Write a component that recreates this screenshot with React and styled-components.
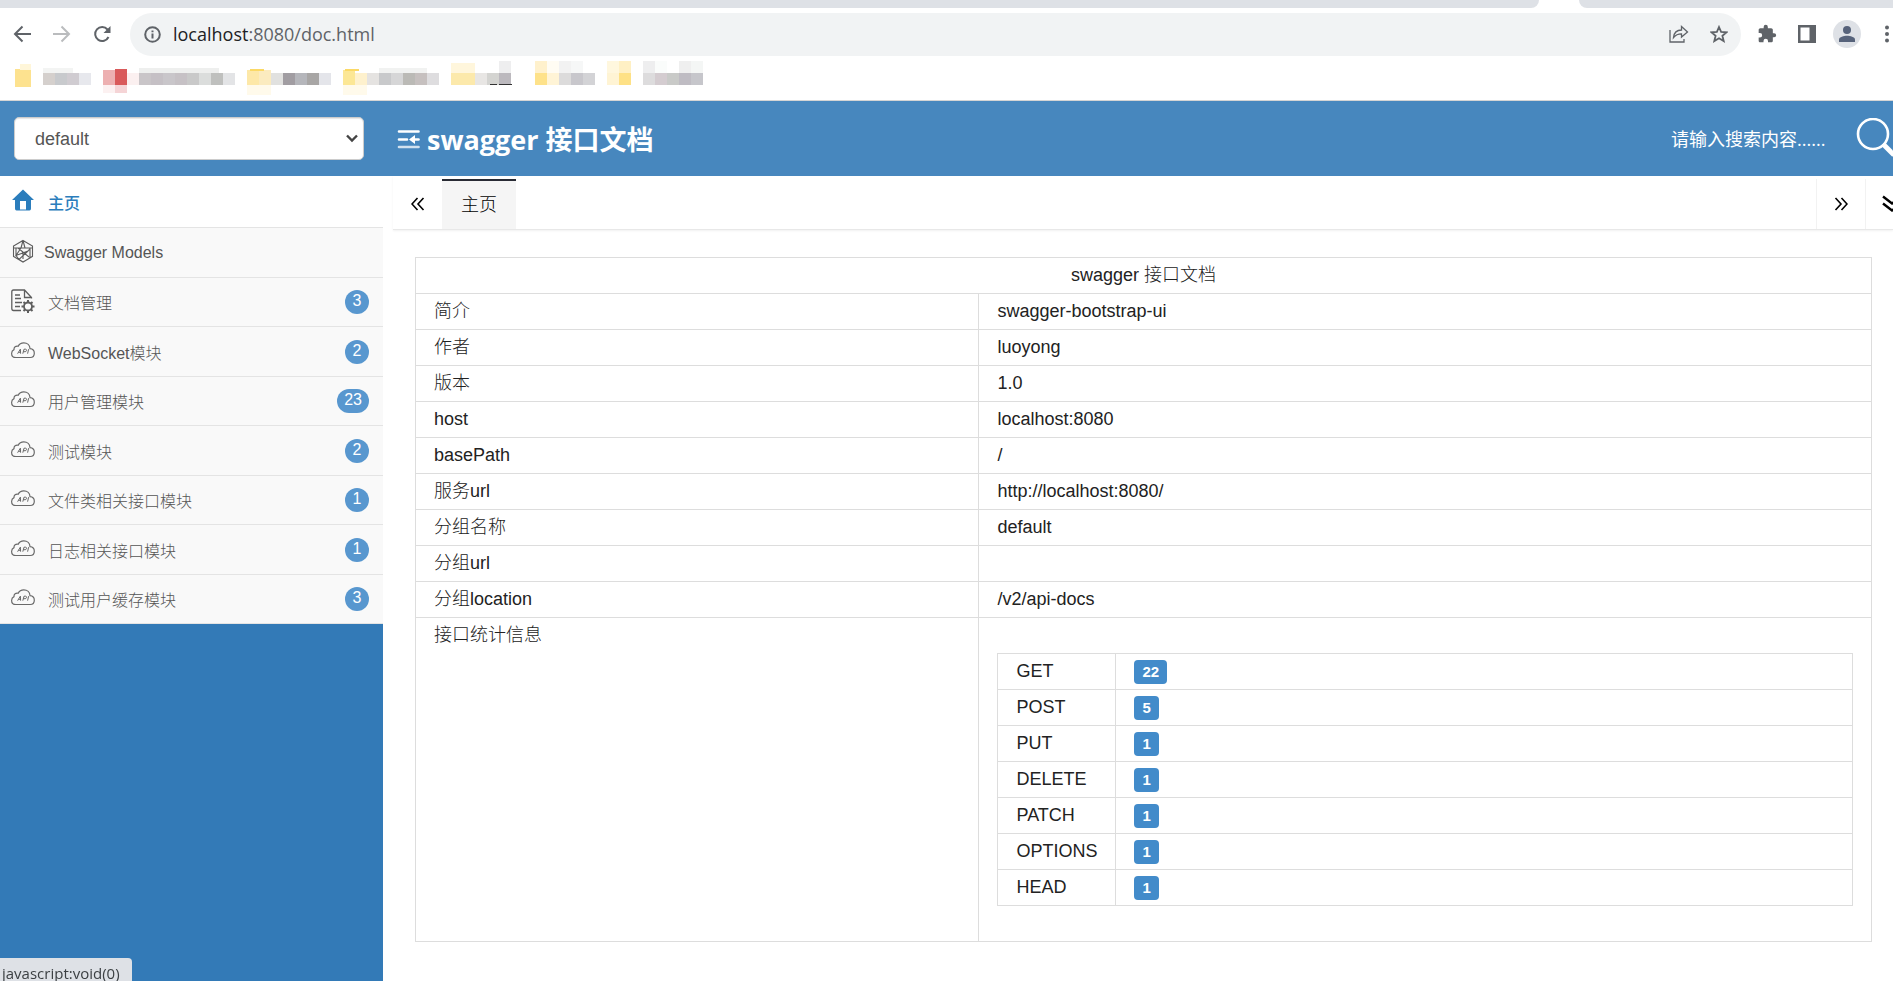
import React from "react"
import styled, { createGlobalStyle, css } from "styled-components"

const GlobalStyle = createGlobalStyle`
  * {
    box-sizing: border-box;
  }
  body {
    margin: 0;
    background-color: #fff;
    color: #333;
    font-family: "Liberation Sans", "Noto Sans CJK SC", sans-serif;
    font-size: 16px;
    overflow: hidden;
  }
  button {
    padding: 0;
    border: none;
    background: none;
    color: inherit;
    font: inherit;
    cursor: pointer;
  }
  svg {
    display: block;
    flex: none;
  }
`

const Page = styled.div`
  min-height: 100vh;
  display: flex;
  flex-direction: column;
`

/* browser */
const TabStrip = styled.div`
  height: 8px;
  display: flex;
  justify-content: space-between;
  gap: 40px;
`
const StripPart = styled.div`
  background-color: #dee1e6;
  ${(p) => p.$grow ? css`
    flex: 1;
    border-bottom-right-radius: 8px;
  ` : css`
    width: 314px;
    border-bottom-left-radius: 8px;
  `}
`
const Toolbar = styled.div`
  height: 52px;
  display: flex;
  align-items: center;
  padding-left: 13px;
  color: #5f6368;
  overflow: hidden;
`
const ToolButton = styled.button`
  width: 40px;
  height: 40px;
  flex: none;
  display: flex;
  align-items: center;
  color: ${(p) => p.$dim ? "#babcbe" : "#5f6368"};
`
const AddressBar = styled.div`
  flex: 1;
  height: 43px;
  display: flex;
  align-items: center;
  gap: 12px;
  margin: 0 6px 0 -3px;
  padding: 0 8px 0 14px;
  border-radius: 22px;
  background-color: #f1f3f4;
`
const Url = styled.div`
  flex: 1;
  color: #5f6368;
  font-family: "Open Sans", sans-serif;
  font-size: 18px;
`
const Host = styled.span`
  color: #202124;
`
const BarButton = styled.button`
  width: 28px;
  display: flex;
  justify-content: center;
`
const Extensions = styled.div`
  display: flex;
  width: 146px;
  flex: none;
`
const ExtensionButton = styled.button`
  width: 40px;
  height: 40px;
  flex: none;
  display: flex;
  align-items: center;
  justify-content: center;
`
const Avatar = styled.span`
  width: 28px;
  height: 28px;
  display: flex;
  align-items: center;
  justify-content: center;
  border-radius: 50%;
  background-color: #dee1e6;
  color: #56627a;
`
const Bookmarks = styled.div`
  height: 41px;
  border-bottom: 1px solid #d5d5d5;
`

/* app header */
const Header = styled.header`
  height: 75px;
  display: flex;
  align-items: center;
  background-color: #4787be;
  color: #fff;
  overflow: hidden;
`
const GroupBox = styled.div`
  width: 383px;
  flex: none;
  padding: 0 19px 0 14px;
`
const SelectWrap = styled.div`
  position: relative;
  color: #444;
`
const SelectArrow = styled.svg`
  position: absolute;
  top: 17px;
  right: 6px;
  pointer-events: none;
`
const Select = styled.select`
  width: 100%;
  height: 43px;
  padding: 0 20px;
  appearance: none;
  border: 1px solid #ccc;
  border-radius: 5px;
  background-color: #fff;
  box-shadow: inset 0 1px 1px rgba(0, 0, 0, 0.1);
  color: #555;
  font-family: inherit;
  font-size: 18px;
`
const Title = styled.h1`
  flex: 1;
  display: flex;
  align-items: center;
  gap: 7px;
  margin: 0;
  padding-left: 14px;
  font-family: "Open Sans", "Noto Sans CJK SC", sans-serif;
  font-size: 27px;
  font-weight: 700;
`
const Search = styled.input`
  width: 176px;
  padding: 0;
  border: none;
  outline: none;
  background: transparent;
  color: #fff;
  font-family: "Open Sans", "Noto Sans CJK SC", sans-serif;
  font-size: 18px;

  &::placeholder {
    color: #fff;
    opacity: 1;
  }
`
const SearchButton = styled.button`
  width: 46px;
  flex: none;
  overflow: hidden;
`

/* sidebar */
const Body = styled.div`
  flex: 1;
  display: flex;
`
const Sidebar = styled.nav`
  width: 383px;
  flex: none;
  background-color: #337ab7;
`
const Menu = styled.ul`
  margin: 0;
  padding: 0;
  list-style: none;
`
const MenuItem = styled.li`
  height: 49px;
  border-bottom: 1px solid #e4e4e4;
  background-color: ${(p) => p.$active ? "#fff" : "#f9f9f9"};

  &:nth-child(even) {
    height: 50px;
  }
  &:first-child {
    height: 52px;
  }
`
const MenuLink = styled.a`
  height: 100%;
  display: flex;
  align-items: center;
  gap: ${(p) => p.$tight ? "9px" : "13px"};
  padding: 0 14px 0 11px;
  color: ${(p) => p.$active ? "#2b7dbc" : "#555"};
  font-weight: ${(p) => p.$active ? 500 : 300};
  text-decoration: none;
`
const MenuIcon = styled.span`
  width: 24px;
  flex: none;
  display: flex;
  padding-bottom: 3px;
`
const MenuText = styled.span`
  flex: 1;
`
const Count = styled.span`
  height: 24px;
  min-width: 24px;
  padding: 0 7px;
  border-radius: 12px;
  background-color: #5897cf;
  color: #fff;
  font-size: 16px;
  line-height: 21px;
  text-align: center;
`

/* content */
const Main = styled.main`
  flex: 1;
  padding-left: 10px;
  overflow: hidden;
`
const TabBar = styled.div`
  height: 54px;
  display: flex;
  padding-top: 3px;
  border-bottom: 1px solid #e8e8e8;
  box-shadow: 0 1px 2px rgba(0, 0, 0, 0.06);
  color: #000;
`
const TabButton = styled.button`
  width: 49px;
  flex: none;
  display: flex;
  align-items: center;
  justify-content: center;
  border-left: ${(p) => p.$line ? "1px solid #f2f2f2" : "none"};
`
const TabButtonEdge = styled(TabButton)`
  width: 28px;
  justify-content: flex-start;
  padding-left: 16px;
  overflow: hidden;
`
const Tab = styled.button`
  width: 74px;
  padding-bottom: 5px;
  border-top: 2px solid #292b34;
  background-color: #f5f5f5;
  color: #000;
  font-size: 18px;
  font-weight: 300;
`
const Spacer = styled.div`
  flex: 1;
`
const TableWrap = styled.div`
  padding: 27px 21px 40px 22px;
`
const Table = styled.table`
  width: 100%;
  border-collapse: collapse;
  color: #222;
  font-size: 18px;
  line-height: 25px;
`
const InnerTable = styled(Table)`
  margin: 30px 0;
`
const Row = styled.tr`
  height: 36px;
`
const Cell = styled.td`
  width: ${(p) => p.$width || "auto"};
  padding: 5px 18px;
  border: 1px solid #ddd;
  text-align: ${(p) => p.$center ? "center" : "left"};
  vertical-align: top;
  font-weight: 300;
`
const Badge = styled.span`
  height: 24px;
  display: block;
  width: fit-content;
  margin-top: 1px;
  padding: 0 8px;
  border-radius: 4px;
  background-color: #428bca;
  color: #fff;
  font-size: 15px;
  font-weight: 700;
  line-height: 24px;
`
const StatusBubble = styled.div`
  position: fixed;
  bottom: 0;
  left: 0;
  height: 23px;
  padding: 0 12px 0 2px;
  border-top-right-radius: 4px;
  background-color: #dee1e6;
  color: #3c4043;
  font-family: "Open Sans", sans-serif;
  font-size: 15px;
  line-height: 30px;
`

const CloudIcon = () => (
  <svg width="24" height="17" viewBox="0 0 24 17" fill="none" stroke="#6a6a6a">
    <path d="M5 15.5C2 15.5 .6 13.6 .6 11.4C.6 9.4 1.7 8.2 3 7.6C2.8 5.2 4.8 3.6 7.2 4.2C8.2 2 10.2 .8 12.8 .8C16.3 .8 18.9 3.2 19 6.6C21.5 6.8 23.3 8.8 23.3 11.2C23.3 13.8 21.5 15.5 19.2 15.5Z" strokeWidth="1.2" />
    <path d="M6.6 11.7L9.4 7.1L9.6 11.7M7.6 10.3H9.5M11.8 11.7L13 7.2H14.6C16 7.2 15.8 9.7 14.2 9.7H12.4M16.6 11.7L17.6 7.2" strokeWidth="1" />
  </svg>
)
const HomeIcon = () => (
  <svg width="24" height="22" viewBox="0 0 24 22" fill="#2b7dbc">
    <path fillRule="evenodd" d="M12 .5L23 11H20V19.5Q20 21.5 18.5 21.5H5.500Q4 21.5 4 19.5V11H1ZM9 12V20.500H15V12Z" />
  </svg>
)
const ModelIcon = () => (
  <svg width="24" height="24" viewBox="0 0 24 24" fill="none" stroke="#5c5c5c" strokeWidth="1.1">
    <path d="M12 1.500L21.500 7V17.500L12 23L2.500 17.500V7ZM3 9H21M12 1.500L10 9M12 1.500L14 9M10 9L5 16.500L17 12L19.500 9M7 9L18 18M17 12L8 20.500L5 16.500M12 14L12 20M8 20.500L12 23M18 18L21.500 17.500M5 9V16.500M19 9V17" />
  </svg>
)
const DocIcon = () => (
  <svg width="24" height="24" viewBox="0 0 24 24" fill="none" stroke="#5e5e5e" strokeWidth="1.3">
    <path d="M10 21.5H2.500Q.8 21.5 .8 19.5V2.8Q.8 1 2.500 1H13.500L20.500 8.500V9.500M13.500 1V8.500H20M4 6H9M4 9.500H10M4 13.500H11M4 17.500H9" />
    <circle cx="17" cy="17.5" r="4" strokeWidth="1.8" />
    <path d="M17 11V13.500M17 21.500V24M10.500 17.500H13M21 17.500H23.500M12.500 13L14.200 14.700M19.800 20.300L21.500 22M12.500 22L14.200 20.300M19.800 14.700L21.500 13" strokeWidth="2" />
  </svg>
)
const FoldIcon = () => (
  <svg width="23" height="20" viewBox="0 0 23 20" fill="none" stroke="#fff" strokeWidth="2.6">
    <path d="M2 2.500H21.500M2 10.500H10" strokeLinecap="round" />
    <path d="M2 18H21.500" strokeLinecap="round" strokeOpacity=".75" />
    <path d="M15 10.500H21.500" strokeLinecap="round" />
    <path d="M12 10.500L18 6V15Z" fill="#fff" stroke="none" />
  </svg>
)
const Chevrons = ({ flip, down }) => (
  <svg width={down ? 22 : 14} height={down ? 18 : 14} viewBox={down ? "0 0 22 18" : "0 0 14 14"} fill="none" stroke="#000" strokeWidth={down ? 2.4 : 1.6}>
    {down
      ? <path d="M1 1.500L10 8.500L19 1.500M1 8.500L10 15.500L19 8.500" />
      : <path d={flip ? "M1.500 1L7 7L1.500 13M7.500 1L13 7L7.500 13" : "M6.500 1L1 7L6.500 13M12.500 1L7 7L12.500 13"} />}
  </svg>
)

/* blurred bookmark entries, [x, y, width, height, colour] */
const mosaic = [
  [15, 9, 16, 18, "#fde28f"], [20, 4, 11, 6, "#fff6d9"], [43, 13, 12, 12, "#d5d0cd"], [55, 13, 12, 12, "#c8cacd"], [67, 13, 12, 12, "#d0ccd1"], [79, 13, 12, 12, "#e7e8ed"], [43, 8, 30, 5, "#f3f4f3"],
  [103, 10, 12, 15, "#edb0b1"], [115, 9, 12, 16, "#d95a5b"], [127, 13, 12, 12, "#fbf0f0"], [103, 25, 12, 8, "#fcf1f1"], [115, 25, 12, 8, "#f5d4d6"],
  [139, 13, 12, 12, "#c9c5c8"], [151, 13, 12, 12, "#c5c0c5"], [163, 13, 12, 12, "#c9c6ca"], [175, 13, 12, 12, "#c6c1c5"], [187, 13, 12, 12, "#c9c9c9"], [199, 13, 12, 12, "#dbdddc"], [211, 13, 12, 12, "#bfc0be"], [223, 13, 12, 12, "#e3e4e6"], [139, 8, 80, 5, "#eeefee"],
  [247, 10, 12, 15, "#fde8a8"], [259, 10, 12, 15, "#fbebbf"], [250, 9, 14, 2, "#fbd966"], [247, 25, 24, 10, "#fffaeb"], [271, 13, 12, 12, "#e1e1df"], [283, 13, 12, 12, "#a19da2"], [295, 13, 12, 12, "#b5b6bb"], [307, 13, 12, 12, "#a8a6a5"], [319, 13, 12, 12, "#e4e5ea"],
  [343, 10, 12, 15, "#fce795"], [355, 13, 12, 12, "#fef1cd"], [345, 9, 14, 2, "#fbd966"], [343, 25, 24, 10, "#fffaeb"], [367, 13, 12, 12, "#e5e3e1"], [379, 13, 12, 12, "#c8c9cb"], [391, 13, 12, 12, "#d6d6d7"], [403, 13, 12, 12, "#bbbab6"], [415, 13, 12, 12, "#c6c0bf"], [427, 13, 12, 12, "#dedddf"], [379, 8, 48, 5, "#f1f2f1"],
  [451, 3, 24, 10, "#fff6dc"], [451, 13, 24, 12, "#fce9ab"], [475, 13, 12, 12, "#e8e6e4"], [487, 13, 12, 12, "#d4d4d1"], [499, 1, 12, 12, "#eeeeef"], [499, 13, 12, 12, "#bcb9be"], [490, 24, 7, 1, "#333"], [499, 24, 13, 1, "#333"],
  [535, 1, 12, 12, "#fff1cc"], [535, 13, 12, 12, "#fee28a"], [547, 1, 12, 12, "#fffcf3"], [547, 13, 12, 12, "#fff4d6"], [559, 1, 12, 12, "#f2f2f2"], [559, 13, 12, 12, "#dcdbdb"], [571, 1, 12, 12, "#f6f7f7"], [571, 13, 12, 12, "#c8c7cc"], [583, 13, 12, 12, "#d3d3d6"],
  [607, 1, 12, 12, "#fff7de"], [607, 13, 12, 12, "#fff4d4"], [619, 1, 12, 12, "#fff0c4"], [619, 13, 12, 12, "#fee186"], [643, 1, 12, 12, "#eeeeef"], [643, 13, 12, 12, "#dddcdd"], [655, 1, 12, 12, "#fafcfb"], [655, 13, 12, 12, "#d4ccd0"], [667, 13, 12, 12, "#c9cac8"], [679, 1, 12, 12, "#efefef"], [679, 13, 12, 12, "#bfbcc3"], [691, 1, 12, 12, "#f4f6f5"], [691, 13, 12, 12, "#c6c6cb"],
]

const menu = [
  { name: "主页", icon: <HomeIcon />, active: true },
  { name: "Swagger Models", icon: <ModelIcon />, tight: true },
  { name: "文档管理", icon: <DocIcon />, count: 3 },
  { name: "WebSocket模块", count: 2 },
  { name: "用户管理模块", count: 23 },
  { name: "测试模块", count: 2 },
  { name: "文件类相关接口模块", count: 1 },
  { name: "日志相关接口模块", count: 1 },
  { name: "测试用户缓存模块", count: 3 },
]

const info = [
  ["简介", "swagger-bootstrap-ui"],
  ["作者", "luoyong"],
  ["版本", "1.0"],
  ["host", "localhost:8080"],
  ["basePath", "/"],
  ["服务url", "http://localhost:8080/"],
  ["分组名称", "default"],
  ["分组url", ""],
  ["分组location", "/v2/api-docs"],
]

const methods = [
  ["GET", 22],
  ["POST", 5],
  ["PUT", 1],
  ["DELETE", 1],
  ["PATCH", 1],
  ["OPTIONS", 1],
  ["HEAD", 1],
]

const Browser = () => (
  <>
    <TabStrip>
      <StripPart $grow />
      <StripPart />
    </TabStrip>
    <Toolbar>
      <ToolButton aria-label="Back">
        <svg width="18" height="18" viewBox="0 0 18 18" fill="none" stroke="currentColor" strokeWidth="2">
          <path d="M18 9H2M9.500 1.500L2 9L9.500 16.500" />
        </svg>
      </ToolButton>
      <ToolButton aria-label="Forward" $dim>
        <svg width="18" height="18" viewBox="0 0 18 18" fill="none" stroke="currentColor" strokeWidth="2">
          <path d="M0 9H16M8.500 1.500L16 9L8.500 16.500" />
        </svg>
      </ToolButton>
      <ToolButton aria-label="Reload">
        <svg width="18" height="18" viewBox="0 0 18 18" fill="none" stroke="currentColor" strokeWidth="2">
          <path d="M15.500 12A7 7 0 1 1 14.500 4.500L15.500 6" />
          <path d="M17.500 1V8H10.500Z" fill="currentColor" stroke="none" />
        </svg>
      </ToolButton>
      <AddressBar>
        <svg width="17" height="17" viewBox="0 0 17 17" fill="none" stroke="currentColor" strokeWidth="2">
          <circle cx="8.5" cy="8.5" r="7.3" />
          <path d="M8.500 7.500V12.500M8.500 4.500V6.300" />
        </svg>
        <Url><Host>localhost</Host>:8080/doc.html</Url>
        <BarButton aria-label="Share">
          <svg width="20" height="18" viewBox="0 0 20 18" fill="none" stroke="currentColor" strokeWidth="1.3">
            <path d="M1 5V17H15V14" />
            <path d="M4.500 12.500C5 8 8 5 12.500 5V1.500L18.500 7L12.500 12V8.800C9 8.800 6.500 10 4.500 12.500Z" />
          </svg>
        </BarButton>
        <BarButton aria-label="Bookmark">
          <svg width="18" height="18" viewBox="0 0 18 18" fill="none" stroke="currentColor" strokeWidth="1.8">
            <path d="M9 2L11.100 6.800L16.500 7.300L12.400 10.800L13.700 16L9 13.200L4.300 16L5.600 10.800L1.500 7.300L6.900 6.800Z" />
          </svg>
        </BarButton>
      </AddressBar>
      <Extensions>
        <ExtensionButton aria-label="Extensions">
          <svg width="20" height="20" viewBox="0 0 24 24" fill="currentColor">
            <path d="M20.500 11H19V7c0-1.100-.9-2-2-2h-4V3.500a2.500 2.500 0 0 0-5 0V5H4c-1.100 0-2 .9-2 2v3.800h1.500a2.700 2.700 0 0 1 0 5.400H2V20c0 1.100.9 2 2 2h3.800v-1.500a2.700 2.700 0 0 1 5.400 0V22H17c1.100 0 2-.9 2-2v-4h1.500a2.500 2.500 0 0 0 0-5z" />
          </svg>
        </ExtensionButton>
        <ExtensionButton aria-label="Side panel">
          <svg width="18" height="18" viewBox="0 0 18 18" fill="currentColor">
            <path fillRule="evenodd" d="M0 0H18V18H0ZM2.500 2.500V15.500H11.500V2.500Z" />
          </svg>
        </ExtensionButton>
        <ExtensionButton aria-label="Profile">
          <Avatar>
            <svg width="16" height="16" viewBox="0 0 16 16" fill="currentColor">
              <circle cx="8" cy="4" r="4" />
              <path d="M0 16V13.500C0 11 5 9.800 8 9.800S16 11 16 13.500V16Z" />
            </svg>
          </Avatar>
        </ExtensionButton>
        <ExtensionButton aria-label="Menu">
          <svg width="4" height="18" viewBox="0 0 4 18" fill="currentColor">
            <circle cx="2" cy="2.5" r="2" />
            <circle cx="2" cy="9" r="2" />
            <circle cx="2" cy="15.5" r="2" />
          </svg>
        </ExtensionButton>
      </Extensions>
    </Toolbar>
    <Bookmarks>
      <svg width="710" height="40" viewBox="0 0 710 40" shapeRendering="crispEdges">
        {mosaic.map(([x, y, w, h, fill]) => (
          <rect key={`${x}-${y}`} x={x} y={y} width={w} height={h} fill={fill} />
        ))}
      </svg>
    </Bookmarks>
  </>
)

export default function App() {
  return (
    <Page>
      <GlobalStyle />
      <Browser />
      <Header>
        <GroupBox>
          <SelectWrap>
            <Select aria-label="分组" defaultValue="default">
              <option value="default">default</option>
            </Select>
            <SelectArrow width="12" height="9" viewBox="0 0 12 9" fill="none" stroke="currentColor" strokeWidth="2.4">
              <path d="M1 1.500L6 6.500L11 1.500" />
            </SelectArrow>
          </SelectWrap>
        </GroupBox>
        <Title>
          <FoldIcon />
          swagger 接口文档
        </Title>
        <Search type="text" aria-label="搜索" placeholder="请输入搜索内容......" />
        <SearchButton aria-label="搜索">
          <svg width="46" height="42" viewBox="0 0 46 42" fill="none" stroke="#fff">
            <circle cx="26" cy="16" r="15" strokeWidth="2.6" />
            <path d="M36 26L47 37" strokeWidth="5" />
          </svg>
        </SearchButton>
      </Header>
      <Body>
        <Sidebar>
          <Menu>
            {menu.map((item) => (
              <MenuItem key={item.name} $active={item.active}>
                <MenuLink href="#" $active={item.active} $tight={item.tight}>
                  <MenuIcon>{item.icon || <CloudIcon />}</MenuIcon>
                  <MenuText>{item.name}</MenuText>
                  {item.count && <Count>{item.count}</Count>}
                </MenuLink>
              </MenuItem>
            ))}
          </Menu>
        </Sidebar>
        <Main>
          <TabBar>
            <TabButton aria-label="向左"><Chevrons /></TabButton>
            <Tab>主页</Tab>
            <Spacer />
            <TabButton aria-label="向右" $line><Chevrons flip /></TabButton>
            <TabButtonEdge aria-label="更多" $line><Chevrons down /></TabButtonEdge>
          </TabBar>
          <TableWrap>
            <Table>
              <tbody>
                <Row>
                  <Cell as="th" colSpan="2" $center>swagger 接口文档</Cell>
                </Row>
                {info.map(([name, value]) => (
                  <Row key={name}>
                    <Cell $width="38.7%">{name}</Cell>
                    <Cell>{value}</Cell>
                  </Row>
                ))}
                <Row>
                  <Cell>接口统计信息</Cell>
                  <Cell>
                    <InnerTable>
                      <tbody>
                        {methods.map(([name, total]) => (
                          <Row key={name}>
                            <Cell $width="118px">{name}</Cell>
                            <Cell><Badge>{total}</Badge></Cell>
                          </Row>
                        ))}
                      </tbody>
                    </InnerTable>
                  </Cell>
                </Row>
              </tbody>
            </Table>
          </TableWrap>
        </Main>
      </Body>
      <StatusBubble>javascript:void(0)</StatusBubble>
    </Page>
  )
}
